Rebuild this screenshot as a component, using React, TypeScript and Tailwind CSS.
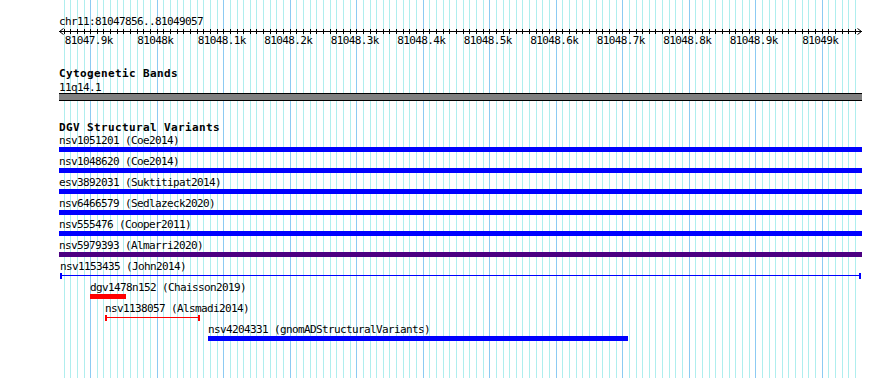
import React from "react";

const X0 = 59; // left edge of the track area
const scaleX = (bp: number) => 156.7 + (bp - 81048000) * 0.665;

type Grid = { x: number; major: boolean };
const grid: Grid[] = [];
for (let bp = 81047860; bp <= 81049050; bp += 10) {
  grid.push({ x: Math.round(scaleX(bp)), major: bp % 100 === 0 });
}

const majors: { x: number; label: string }[] = [];
for (let bp = 81047900; bp <= 81049000; bp += 100) {
  majors.push({ x: scaleX(bp), label: `${bp / 1000}k` });
}

type Feature = {
  label: string;
  kind: "bar" | "line";
  color: string; // tailwind class
  offset: string; // tailwind class
  width: string; // tailwind class
};

const fullRows: Feature[] = [
  { label: "nsv1051201 (Coe2014)", kind: "bar", color: "bg-[#0000ff]", offset: "ml-0", width: "w-[803px]" },
  { label: "nsv1048620 (Coe2014)", kind: "bar", color: "bg-[#0000ff]", offset: "ml-0", width: "w-[803px]" },
  { label: "esv3892031 (Suktitipat2014)", kind: "bar", color: "bg-[#0000ff]", offset: "ml-0", width: "w-[803px]" },
  { label: "nsv6466579 (Sedlazeck2020)", kind: "bar", color: "bg-[#0000ff]", offset: "ml-0", width: "w-[803px]" },
  { label: "nsv555476 (Cooper2011)", kind: "bar", color: "bg-[#0000ff]", offset: "ml-0", width: "w-[803px]" },
  { label: "nsv5979393 (Almarri2020)", kind: "bar", color: "bg-[#4b0082]", offset: "ml-0", width: "w-[803px]" },
  { label: "nsv1153435 (John2014)", kind: "line", color: "bg-[#0000ff]", offset: "ml-px", width: "w-[801px]" },
  { label: "dgv1478n152 (Chaisson2019)", kind: "bar", color: "bg-[#ff0000]", offset: "ml-[31px]", width: "w-[36px]" },
  { label: "nsv1138057 (Alsmadi2014)", kind: "line", color: "bg-[#ff0000]", offset: "ml-[46px]", width: "w-[95px]" },
  { label: "nsv4204331 (gnomADStructuralVariants)", kind: "bar", color: "bg-[#0000ff]", offset: "ml-[149px]", width: "w-[420px]" },
];

function FeatureRow({ f }: { f: Feature }) {
  return (
    <div className={`h-[21px] ${f.offset}`}>
      <div className="h-[11px] whitespace-nowrap">{f.label}</div>
      {f.kind === "bar" ? (
        <div className={`mt-px h-[5px] ${f.width} ${f.color}`} />
      ) : (
        <div className={`mt-px h-[6px] flex items-start ${f.width}`}>
          <div className={`w-[2px] h-[6px] ${f.color}`} />
          <div className={`flex-1 h-px mt-[2px] ${f.color}`} />
          <div className={`w-[2px] h-[6px] ${f.color}`} />
        </div>
      )}
    </div>
  );
}

function Ruler() {
  return (
    <div className="w-[803px]">
      <svg width={803} height={8} className="block" shapeRendering="crispEdges">
        <rect x={0} y={4} width={803} height={1} fill="#000" />
        {grid.map((g) => (
          <rect key={g.x} x={g.x - X0} y={2} width={1} height={5} fill="#000" />
        ))}
        <path d="M0.5 4.5 L4.5 1.5 M0.5 4.5 L4.5 7.5" stroke="#000" strokeWidth={1} fill="none" shapeRendering="auto" />
        <path d="M802.5 4.5 L798.5 1.5 M802.5 4.5 L798.5 7.5" stroke="#000" strokeWidth={1} fill="none" shapeRendering="auto" />
      </svg>
      <div className="relative h-[11px]">
        {majors.map((m) => (
          <span
            key={m.label}
            className="absolute top-0 -translate-x-1/2 whitespace-nowrap"
            style={{ left: m.x - X0 - 1.5 }}
          >
            {m.label}
          </span>
        ))}
      </div>
    </div>
  );
}

export default function App() {
  return (
    <div className="relative w-[890px] h-[378px] overflow-hidden bg-white text-black font-['DejaVu_Sans_Mono',monospace] text-[11px] leading-[11px] tracking-[-0.62px]">
      <div className="absolute inset-0">
        {grid.map((g) => (
          <div
            key={g.x}
            className={`absolute top-0 bottom-0 w-px ${g.major ? "bg-[#8ccbf2]" : "bg-[#afeeee]"}`}
            style={{ left: g.x }}
          />
        ))}
      </div>

      <div className="relative pl-[59px] pt-[16px] flex flex-col items-start">
        <div className="h-[11px] whitespace-nowrap">chr11:81047856..81049057</div>
        <Ruler />

        <div className="mt-[22px] h-[11px] font-bold tracking-[0.38px] whitespace-nowrap">Cytogenetic Bands</div>
        <div className="mt-[3px] h-[11px] whitespace-nowrap">11q14.1</div>
        <div className="w-[803px] h-[8px] border-t border-b border-black bg-[#808080]" />

        <div className="mt-[21px] h-[11px] font-bold tracking-[0.38px] whitespace-nowrap">DGV Structural Variants</div>
        <div className="mt-[2px] flex flex-col items-start">
          {fullRows.map((f) => (
            <FeatureRow key={f.label} f={f} />
          ))}
        </div>
      </div>
    </div>
  );
}
